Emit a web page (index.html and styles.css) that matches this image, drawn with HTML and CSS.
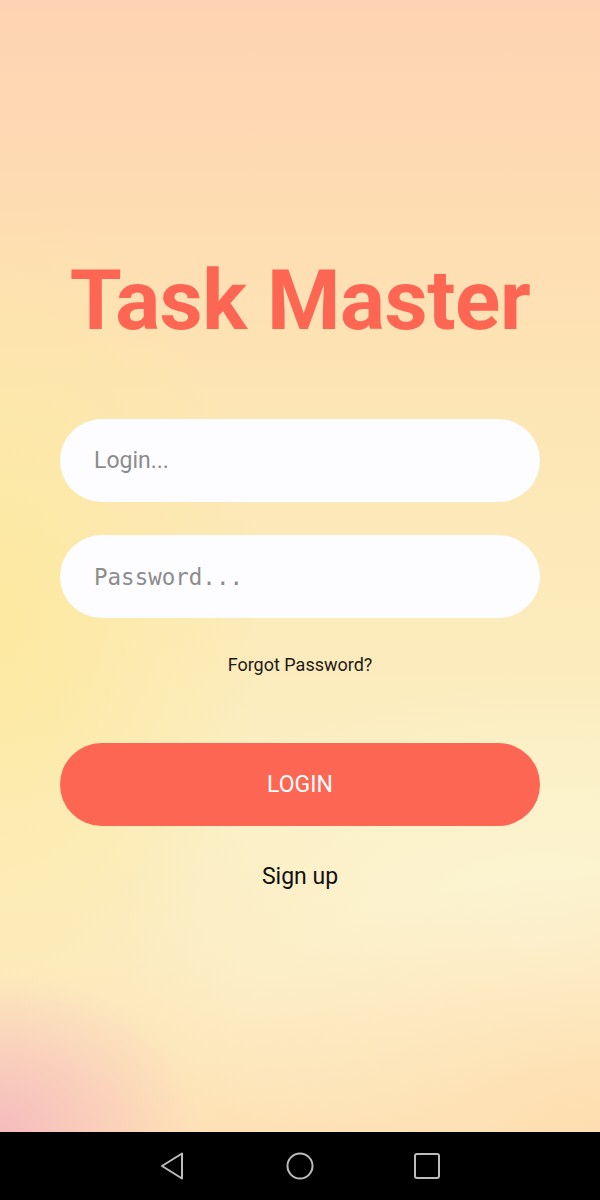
FILE: index.html
```html
<!DOCTYPE html>
<html>
<head>
<meta charset="utf-8">
<link rel="stylesheet" href="styles.css">
</head>
<body>
<div class="screen">
  <main class="content">
    <h1 class="title">Task Master</h1>
    <div class="field"><span class="placeholder">Login...</span></div>
    <div class="field field-pass"><span class="placeholder mono">Password...</span></div>
    <div class="forgot">Forgot Password?</div>
    <button class="login">LOGIN</button>
    <div class="signup">Sign up</div>
  </main>
  <nav class="navbar">
    <svg class="nav-icon" width="28" height="30" viewBox="0 0 28 30"><path d="M23 2.5 L23 27.5 L3 15 Z" fill="none" stroke="#bdbdbd" stroke-width="2" stroke-linejoin="round"/></svg>
    <svg class="nav-icon" width="30" height="30" viewBox="0 0 30 30"><circle cx="15" cy="15" r="12.5" fill="none" stroke="#bdbdbd" stroke-width="2"/></svg>
    <svg class="nav-icon" width="28" height="28" viewBox="0 0 28 28"><rect x="2" y="2" width="24" height="24" rx="2" fill="none" stroke="#bdbdbd" stroke-width="2"/></svg>
  </nav>
</div>
</body>
</html>
```
FILE: styles.css
```css
html, body {
  margin: 0;
  padding: 0;
}
body {
  width: 600px;
  height: 1200px;
  font-family: Roboto, "Liberation Sans", sans-serif;
  overflow: hidden;
}
.screen {
  display: flex;
  flex-direction: column;
  height: 1200px;
}
.content {
  height: 1132px;
  box-sizing: border-box;
  padding: 251px 60px 0;
  display: flex;
  flex-direction: column;
  align-items: stretch;
  background:
    radial-gradient(ellipse 200px 160px at 0% 100%, rgba(245,185,190,0.95) 0%, rgba(245,185,190,0) 100%),
    radial-gradient(ellipse 420px 260px at 100% 100%, rgba(254,222,176,1) 0%, rgba(254,222,176,0) 100%),
    radial-gradient(ellipse 420px 260px at 90% 83%, rgba(252,245,212,1) 0%, rgba(252,245,212,0) 100%),
    radial-gradient(ellipse 260px 420px at 0% 55%, rgba(253,233,160,1) 0%, rgba(253,233,160,0) 100%),
    linear-gradient(180deg, #fed3b3 0%, #fedcb2 18%, #fde5b5 35%, #fcebbb 55%, #fbefc4 72%, #fcebc0 85%, #fee2b6 100%);
}
.title {
  margin: 0;
  font-size: 84px;
  line-height: 100px;
  font-weight: 700;
  color: #fe6654;
  text-align: center;
  letter-spacing: -0.5px;
}
.field {
  margin-top: 68px;
  height: 83px;
  border-radius: 42px;
  background: #fdfcff;
  display: flex;
  align-items: center;
  padding-left: 34px;
}
.field-pass {
  margin-top: 33px;
}
.placeholder {
  font-size: 23px;
  color: #8c8c8c;
}
.mono {
  font-family: "DejaVu Sans Mono", "Liberation Mono", monospace;
  font-size: 22.5px;
}
.forgot {
  margin-top: 36px;
  font-size: 18px;
  line-height: 22px;
  color: #1e1a16;
  text-align: center;
}
.login {
  margin-top: 67px;
  height: 83px;
  border: none;
  border-radius: 42px;
  background: #fe6654;
  color: #ffffff;
  font-family: Roboto, "Liberation Sans", sans-serif;
  font-size: 23px;
  padding: 0;
}
.signup {
  margin-top: 38px;
  font-size: 23px;
  line-height: 26px;
  color: #111;
  text-align: center;
}
.navbar {
  height: 68px;
  background: #000;
  display: flex;
  justify-content: center;
  align-items: center;
  gap: 98px;
}
.nav-icon {
  display: block;
}
```
